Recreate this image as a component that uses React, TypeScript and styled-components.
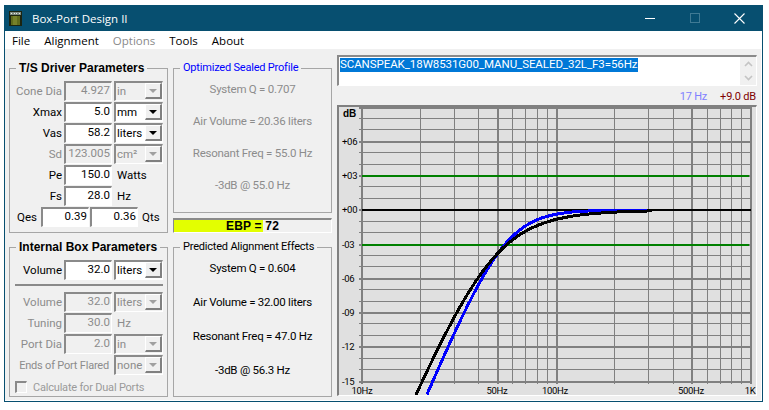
import React from 'react';
import styled, { createGlobalStyle } from 'styled-components';

const GlobalStyle = createGlobalStyle`
  html, body {
    margin: 0;
    padding: 0;
    background: #ffffff;
  }
  body {
    font-family: Roboto, "Liberation Sans", Arial, sans-serif;
    font-size: 11.5px;
    color: #000000;
  }
`;

const Page = styled.div`
  width: 769px;
  height: 410px;
  padding: 5px 0 0 4px;
  box-sizing: border-box;
  overflow: hidden;
`;

const Window = styled.div`
  width: 759px;
  height: 397px;
  box-sizing: border-box;
  border: 1px solid #074f70;
  border-top: none;
  display: flex;
  flex-direction: column;
`;

const TitleBar = styled.div`
  height: 26px;
  flex: none;
  background: #074f70;
  color: #ffffff;
  display: flex;
  align-items: center;
  padding-left: 4px;
  font-family: "Open Sans", sans-serif;
  font-size: 11.5px;
`;

const AppTitle = styled.span`
  margin-left: 10px;
  flex: 1;
`;

const CaptionButton = styled.div`
  width: 45px;
  height: 26px;
  display: flex;
  align-items: center;
  justify-content: center;
`;

const MenuBar = styled.div`
  height: 18px;
  flex: none;
  background: #ffffff;
  display: flex;
  align-items: center;
  padding-left: 7px;
  gap: 14px;
  font-family: "Open Sans", sans-serif;
  font-size: 11.5px;
`;

const MenuItem = styled.span<{ $disabled?: boolean }>`
  color: ${(props) => (props.$disabled ? '#8a8a8a' : '#000000')};
`;

const Client = styled.div`
  flex: 1;
  min-height: 0;
  background: #f0f0f0;
  border-bottom: 1px solid #ffffff;
  border-right: 1px solid #ffffff;
  display: flex;
  gap: 5px;
  padding: 6px 4px 0 4px;
`;

const Column = styled.div`
  width: 159px;
  flex: none;
  display: flex;
  flex-direction: column;
  padding-top: 6px;
`;

const GroupBox = styled.fieldset<{ $height: number; $gapBelow?: number }>`
  height: ${(props) => props.$height}px;
  margin: 0 0 ${(props) => props.$gapBelow ?? 0}px 0;
  padding: 0;
  box-sizing: border-box;
  border: 1px solid #a6a6a6;
  min-width: 0;
`;

const GroupTitle = styled.legend<{ $color?: string; $bold?: boolean }>`
  margin-left: 6px;
  padding: 0 3px;
  height: 14px;
  line-height: 14px;
  white-space: nowrap;
  font-family: ${(props) => (props.$bold ? '"Liberation Sans", Arial, sans-serif' : 'inherit')};
  font-weight: ${(props) => (props.$bold ? 700 : 400)};
  font-size: ${(props) => (props.$bold ? '12px' : '11px')};
  letter-spacing: ${(props) => (props.$bold ? '0' : '-0.2px')};
  color: ${(props) => props.$color ?? '#000000'};
`;

const Rows = styled.div`
  display: flex;
  flex-direction: column;
  gap: 1px;
  padding-top: 6px;
`;

const PortRows = styled(Rows)`
  padding-top: 0;
`;

const Row = styled.div`
  display: flex;
  align-items: center;
  gap: 2px;
  height: 20px;
`;

const FieldLabel = styled.span<{ $disabled?: boolean }>`
  width: 52px;
  flex: none;
  text-align: right;
  white-space: nowrap;
  color: ${(props) => (props.$disabled ? '#8c8c8c' : '#000000')};
`;

const WideLabel = styled(FieldLabel)`
  width: 99px;
  padding-right: 3px;
  font-size: 11px;
  letter-spacing: -0.2px;
`;

const Unit = styled.span<{ $disabled?: boolean }>`
  margin-left: 3px;
  color: ${(props) => (props.$disabled ? '#8c8c8c' : '#000000')};
`;

const NumberBox = styled.div<{ $disabled?: boolean }>`
  width: 48px;
  height: 20px;
  box-sizing: border-box;
  flex: none;
  border-style: solid;
  border-width: 2px 1px 1px 2px;
  border-color: #8a8a8a #ffffff #ffffff #8a8a8a;
  background: ${(props) => (props.$disabled ? '#f0f0f0' : '#ffffff')};
  color: ${(props) => (props.$disabled ? '#8c8c8c' : '#000000')};
  text-align: right;
  line-height: 15px;
  padding-right: 1px;
`;

const ComboBox = styled.div<{ $disabled?: boolean }>`
  width: 49px;
  height: 20px;
  box-sizing: border-box;
  flex: none;
  border-style: solid;
  border-width: 2px 1px 1px 2px;
  border-color: #8a8a8a #ffffff #ffffff #8a8a8a;
  background: ${(props) => (props.$disabled ? '#f0f0f0' : '#ffffff')};
  color: ${(props) => (props.$disabled ? '#8c8c8c' : '#000000')};
  display: flex;
  justify-content: space-between;
  padding-left: 1px;
  line-height: 17px;
`;

const ComboButton = styled.div`
  width: 17px;
  height: 16px;
  box-sizing: border-box;
  background: #f0f0f0;
  border-style: solid;
  border-width: 1px 2px 2px 1px;
  border-color: #ffffff #808080 #808080 #ffffff;
  display: flex;
  align-items: center;
  justify-content: center;
`;

const ComboArrow = styled.div<{ $disabled?: boolean }>`
  width: 0;
  height: 0;
  border-left: 4px solid transparent;
  border-right: 4px solid transparent;
  border-top: 4px solid ${(props) => (props.$disabled ? '#a0a0a0' : '#000000')};
`;

const QRow = styled.div`
  display: flex;
  align-items: center;
  height: 20px;
  padding-left: 7px;
  margin-top: 1px;
  gap: 1px;
`;

const QLabel = styled.span`
  width: 22px;
  margin-right: 1px;
`;

const Separator = styled.div`
  height: 2px;
  margin: 4px 4px 6px 5px;
  background: #8a8a8a;
`;

const CheckRow = styled.div`
  display: flex;
  align-items: center;
  height: 14px;
  margin: 5px 0 0 5px;
  gap: 6px;
  font-size: 11px;
  letter-spacing: -0.2px;
  color: #9a9a9a;
`;

const CheckBox = styled.div`
  width: 12px;
  height: 12px;
  box-sizing: border-box;
  border-style: solid;
  border-width: 2px 1px 1px 2px;
  border-color: #8a8a8a #ffffff #ffffff #8a8a8a;
`;

const ResultList = styled.div<{ $gap: number; $disabled?: boolean }>`
  display: flex;
  flex-direction: column;
  align-items: center;
  gap: ${(props) => props.$gap}px;
  padding-top: 7px;
  letter-spacing: -0.25px;
  color: ${(props) => (props.$disabled ? '#8c8c8c' : '#000000')};
`;

const ResultLine = styled.div`
  height: 14px;
  line-height: 14px;
`;

const EbpBar = styled.div<{ $fill: number }>`
  height: 15px;
  flex: none;
  margin: 5px 0 7px 0;
  box-sizing: border-box;
  border-style: solid;
  border-width: 2px 1px 1px 1px;
  border-color: #8a8a8a #ffffff #ffffff #8a8a8a;
  background: linear-gradient(to right, #e3ff00 ${(props) => props.$fill}%, #f0f0f0 ${(props) => props.$fill}%);
  text-align: center;
  font-family: "Liberation Sans", Arial, sans-serif;
  font-weight: 700;
  font-size: 12px;
  letter-spacing: 0.2px;
  line-height: 13px;
`;

const GraphColumn = styled.div`
  width: 420px;
  flex: none;
  display: flex;
  flex-direction: column;
`;

const NoteBox = styled.div`
  height: 31px;
  flex: none;
  box-sizing: border-box;
  border-style: solid;
  border-width: 2px 1px 1px 2px;
  border-color: #8a8a8a #ffffff #ffffff #8a8a8a;
  background: #ffffff;
  display: flex;
  justify-content: space-between;
`;

const NoteText = styled.span`
  align-self: flex-start;
  margin: 1px 0 0 1px;
  height: 14px;
  line-height: 13px;
  letter-spacing: -0.07px;
  background: #0078d7;
  color: #ffffff;
  white-space: nowrap;
`;

const NoteScroll = styled.div`
  width: 16px;
  background: #f0f0f0;
  display: flex;
  flex-direction: column;
  align-items: center;
  justify-content: space-around;
`;

const Readout = styled.div`
  height: 19px;
  flex: none;
  display: flex;
  justify-content: flex-end;
  align-items: center;
  gap: 13px;
  padding: 1px 1px 0 0;
  box-sizing: border-box;
  font-size: 11px;
  letter-spacing: -0.2px;
`;

const ReadoutValue = styled.span<{ $color: string }>`
  color: ${(props) => props.$color};
`;

const ChartFrame = styled.div`
  height: 291px;
  flex: none;
  box-sizing: border-box;
  border-style: solid;
  border-width: 2px 1px 1px 2px;
  border-color: #808080 #ffffff #ffffff #808080;
  background: #e0e0e0;
`;

const ChartSvg = styled.svg`
  display: block;
`;

const AxisText = styled.text<{ $bold?: boolean }>`
  font-family: ${(props) => (props.$bold ? '"Liberation Sans"' : 'Roboto')}, Arial, sans-serif;
  font-size: ${(props) => (props.$bold ? '10px' : '9.5px')};
  font-weight: ${(props) => (props.$bold ? 700 : 400)};
  letter-spacing: ${(props) => (props.$bold ? '0' : '-0.3px')};
  fill: #000000;
`;

function AppIcon(): React.ReactElement {
  return (
    <svg width='13' height='15' viewBox='0 0 14 16' shapeRendering='crispEdges'>
      <rect x='0' y='0' width='14' height='16' fill='#1c2410' />
      <rect x='1' y='1' width='12' height='3' fill='#7d8a80' />
      <rect x='2' y='2' width='1' height='1' fill='#e8e8e8' />
      <rect x='5' y='2' width='1' height='1' fill='#e8e8e8' />
      <rect x='8' y='2' width='1' height='1' fill='#e8e8e8' />
      <rect x='11' y='2' width='1' height='1' fill='#e8e8e8' />
      <rect x='2' y='5' width='10' height='10' fill='#5f6b1c' />
      <rect x='4' y='5' width='5' height='10' fill='#76812a' />
    </svg>
  );
}

function Dropdown({ value, disabled }: { value: string; disabled?: boolean }): React.ReactElement {
  return (
    <ComboBox $disabled={disabled}>
      {value}
      <ComboButton><ComboArrow $disabled={disabled} /></ComboButton>
    </ComboBox>
  );
}

const driverRows = [
  { label: 'Cone Dia', value: '4.927', combo: 'in', disabled: true },
  { label: 'Xmax', value: '5.0', combo: 'mm' },
  { label: 'Vas', value: '58.2', combo: 'liters' },
  { label: 'Sd', value: '123.005', combo: 'cm²', disabled: true },
  { label: 'Pe', value: '150.0', unit: 'Watts' },
  { label: 'Fs', value: '28.0', unit: 'Hz' },
];

const portRows = [
  { label: 'Volume', value: '32.0', combo: 'liters' },
  { label: 'Tuning', value: '30.0', unit: 'Hz' },
  { label: 'Port Dia', value: '2.0', combo: 'in' },
];

const optimizedLines = ['System Q = 0.707', 'Air Volume = 20.36 liters', 'Resonant Freq = 55.0 Hz', '-3dB @ 55.0 Hz'];
const predictedLines = ['System Q = 0.604', 'Air Volume = 32.00 liters', 'Resonant Freq = 47.0 Hz', '-3dB @ 56.3 Hz'];

// Chart geometry is in page pixels, the viewBox starts at the frame's inner corner
const freqX = (freq: number): number => Math.round(361 + 194.5 * Math.log10(freq / 10));
const dbY = (step: number): number => Math.floor(107 + step * 11.42);
const minorFreqs = [20, 30, 40, 60, 70, 80, 90, 200, 300, 400, 600, 700, 800, 900];
const majorFreqs = [10, 50, 100, 500, 1000];
const dbLabels = ['+06', '+03', '+00', '-03', '-06', '-09', '-12', '-15'];
const freqLabels = [
  { text: '10Hz', x: 362 },
  { text: '50Hz', x: 497 },
  { text: '100Hz', x: 555 },
  { text: '500Hz', x: 691 },
  { text: '1K', x: 750 },
];

// Second order high pass response, the same sums the two result panels come from
function responsePath(resonance: number, q: number): string {
  const points: string[] = [];
  for (let x = 410; x <= 652; x += 1) {
    const freq = 10 * 10 ** ((x - 361) / 194.5);
    const ratio = (resonance / freq) ** 2;
    const db = -10 * Math.log10((1 - ratio) ** 2 + ratio / (q * q));
    const y = 210 - db * 11.42;
    if (y <= 395) {
      points.push(`${x} ${y.toFixed(1)}`);
    }
  }
  return `M${points.join('L')}`;
}

function ResponseChart(): React.ReactElement {
  const steps = Array.from({ length: 25 }, (_, index) => index);
  return (
    <ChartSvg width='417' height='288' viewBox='339 107 417 288'>
      <g fill='#808080' shapeRendering='crispEdges'>
        {steps.map((step) => (
          <rect key={step} x='359' y={dbY(step)} width='392' height={step % 3 === 0 ? 2 : 1} />
        ))}
        {minorFreqs.map((freq) => (
          <rect key={freq} x={freqX(freq)} y='107' width='1' height='277' />
        ))}
        {majorFreqs.map((freq) => (
          <rect key={freq} x={freqX(freq)} y='107' width='2' height='277' />
        ))}
      </g>
      <g fill='#008000' shapeRendering='crispEdges'>
        <rect x='362' y='175' width='387' height='2' />
        <rect x='362' y='244' width='387' height='2' />
      </g>
      <rect x='362' y='209' width='389' height='2' fill='#000000' shapeRendering='crispEdges' />
      <path d={responsePath(55, 0.707)} fill='none' stroke='#0000ff' strokeWidth='3' shapeRendering='crispEdges' />
      <path d={responsePath(47, 0.604)} fill='none' stroke='#000000' strokeWidth='3' shapeRendering='crispEdges' />
      <AxisText $bold={true} x='343' y='117'>dB</AxisText>
      {dbLabels.map((label, index) => (
        <AxisText key={label} x='342' y={dbY(3 + index * 3) + 4}>{label}</AxisText>
      ))}
      {freqLabels.map((label) => (
        <AxisText key={label.text} x={label.x} y='394' textAnchor='middle'>{label.text}</AxisText>
      ))}
    </ChartSvg>
  );
}

export default function App(): React.ReactElement {
  return (
    <Page>
      <GlobalStyle />
      <Window>
        <TitleBar>
          <AppIcon />
          <AppTitle>Box-Port Design II</AppTitle>
          <CaptionButton>
            <svg width='10' height='10' viewBox='0 0 10 10' shapeRendering='crispEdges'><rect x='0' y='5' width='10' height='1' fill='#ffffff' /></svg>
          </CaptionButton>
          <CaptionButton>
            <svg width='10' height='10' viewBox='0 0 10 10' shapeRendering='crispEdges'><rect x='0.5' y='0.5' width='9' height='9' fill='none' stroke='#3f7a94' /></svg>
          </CaptionButton>
          <CaptionButton>
            <svg width='11' height='11' viewBox='0 0 11 11'><path d='M0.5 0.5L10.5 10.5M10.5 0.5L0.5 10.5' stroke='#ffffff' strokeWidth='1.1' /></svg>
          </CaptionButton>
        </TitleBar>
        <MenuBar>
          <MenuItem>File</MenuItem>
          <MenuItem>Alignment</MenuItem>
          <MenuItem $disabled={true}>Options</MenuItem>
          <MenuItem>Tools</MenuItem>
          <MenuItem>About</MenuItem>
        </MenuBar>
        <Client>
          <Column>
            <GroupBox $height={172} $gapBelow={7}>
              <GroupTitle $bold={true}>T/S Driver Parameters</GroupTitle>
              <Rows>
                {driverRows.map((row) => (
                  <Row key={row.label}>
                    <FieldLabel $disabled={row.disabled}>{row.label}</FieldLabel>
                    <NumberBox $disabled={row.disabled}>{row.value}</NumberBox>
                    {row.combo && <Dropdown value={row.combo} disabled={row.disabled} />}
                    {row.unit && <Unit>{row.unit}</Unit>}
                  </Row>
                ))}
              </Rows>
              <QRow>
                <QLabel>Qes</QLabel>
                <NumberBox>0.39</NumberBox>
                <NumberBox>0.36</NumberBox>
                <Unit>Qts</Unit>
              </QRow>
            </GroupBox>
            <GroupBox $height={157}>
              <GroupTitle $bold={true}>Internal Box Parameters</GroupTitle>
              <Rows>
                <Row>
                  <FieldLabel>Volume</FieldLabel>
                  <NumberBox>32.0</NumberBox>
                  <Dropdown value='liters' />
                </Row>
              </Rows>
              <Separator />
              <PortRows>
                {portRows.map((row) => (
                  <Row key={row.label}>
                    <FieldLabel $disabled={true}>{row.label}</FieldLabel>
                    <NumberBox $disabled={true}>{row.value}</NumberBox>
                    {row.combo && <Dropdown value={row.combo} disabled={true} />}
                    {row.unit && <Unit $disabled={true}>{row.unit}</Unit>}
                  </Row>
                ))}
                <Row>
                  <WideLabel $disabled={true}>Ends of Port Flared</WideLabel>
                  <Dropdown value='none' disabled={true} />
                </Row>
              </PortRows>
              <CheckRow>
                <CheckBox />
                Calculate for Dual Ports
              </CheckRow>
            </GroupBox>
          </Column>
          <Column>
            <GroupBox $height={152}>
              <GroupTitle $color='#0000ff'>Optimized Sealed Profile</GroupTitle>
              <ResultList $gap={18} $disabled={true}>
                {optimizedLines.map((line) => <ResultLine key={line}>{line}</ResultLine>)}
              </ResultList>
            </GroupBox>
            <EbpBar $fill={57}>EBP = 72</EbpBar>
            <GroupBox $height={157}>
              <GroupTitle>Predicted Alignment Effects</GroupTitle>
              <ResultList $gap={20}>
                {predictedLines.map((line) => <ResultLine key={line}>{line}</ResultLine>)}
              </ResultList>
            </GroupBox>
          </Column>
          <GraphColumn>
            <NoteBox>
              <NoteText>SCANSPEAK_18W8531G00_MANU_SEALED_32L_F3=56Hz</NoteText>
              <NoteScroll>
                <svg width='9' height='6' viewBox='0 0 9 6'><path d='M1 5L4.5 1.5L8 5' fill='none' stroke='#c4c4c4' strokeWidth='1.6' /></svg>
                <svg width='9' height='6' viewBox='0 0 9 6'><path d='M1 1L4.5 4.5L8 1' fill='none' stroke='#c4c4c4' strokeWidth='1.6' /></svg>
              </NoteScroll>
            </NoteBox>
            <Readout>
              <ReadoutValue $color='#8080ff'>17 Hz</ReadoutValue>
              <ReadoutValue $color='#800000'>+9.0 dB</ReadoutValue>
            </Readout>
            <ChartFrame>
              <ResponseChart />
            </ChartFrame>
          </GraphColumn>
        </Client>
      </Window>
    </Page>
  );
}
